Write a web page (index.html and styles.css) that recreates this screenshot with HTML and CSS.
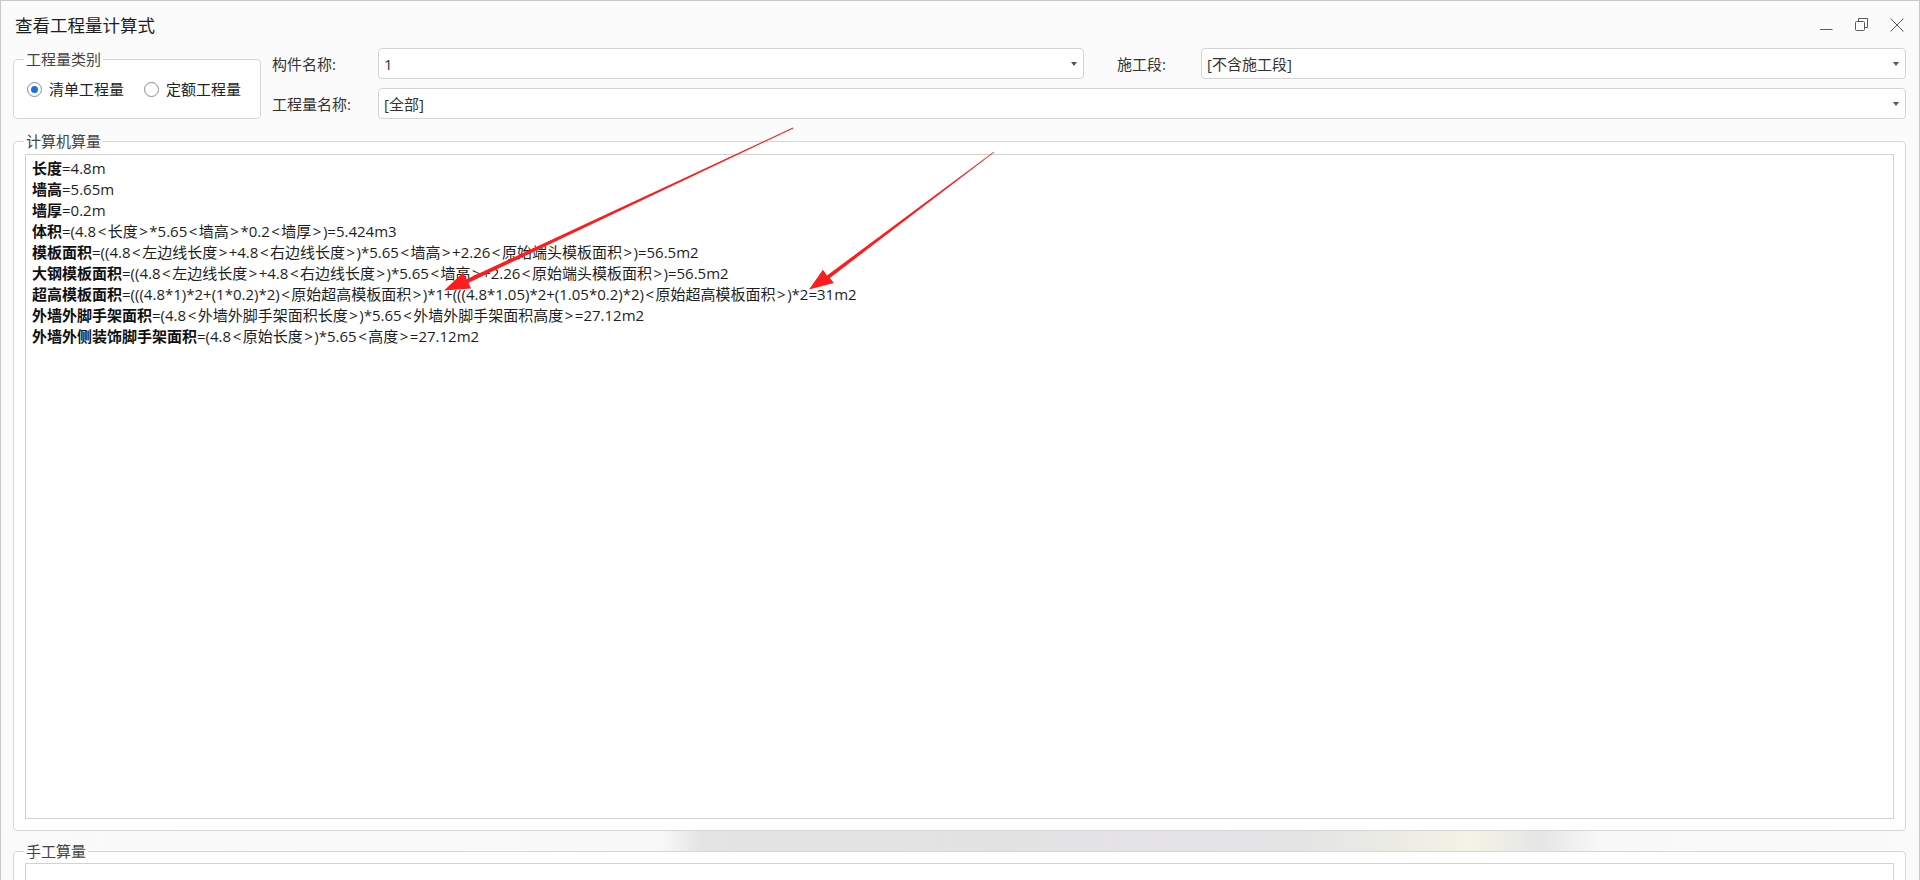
FILE: index.html
```html
<!DOCTYPE html>
<html lang="zh-CN">
<head>
<meta charset="utf-8">
<title>查看工程量计算式</title>
<link rel="stylesheet" href="styles.css">
</head>
<body>
<div class="window">
  <div class="titlebar">
    <span class="title">查看工程量计算式</span>
    <div class="controls">
      <svg class="ctl" width="14" height="14" viewBox="0 0 14 14"><path d="M0 11.5H12.5" /></svg>
      <svg class="ctl" width="14" height="14" viewBox="0 0 14 14"><path d="M3.5 3V0.5H12.5V9.5H10" /><rect x="0.5" y="3.5" width="9" height="9" rx="1" /></svg>
      <svg class="ctl" width="14" height="14" viewBox="0 0 14 14"><path d="M0.5 0.5L13.5 13.5M13.5 0.5L0.5 13.5" /></svg>
    </div>
  </div>

  <div class="header">
    <fieldset class="group type-group">
      <legend>工程量类别</legend>
      <div class="radios">
        <label class="radio checked"><span class="dot"></span>清单工程量</label>
        <label class="radio"><span class="dot"></span>定额工程量</label>
      </div>
    </fieldset>
    <div class="form">
      <span class="lbl">构件名称:</span>
      <div class="combo"><span>1</span><i class="arrow"></i></div>
      <span class="lbl lbl-seg">施工段:</span>
      <div class="combo"><span>[不含施工段]</span><i class="arrow"></i></div>
      <span class="lbl">工程量名称:</span>
      <div class="combo wide"><span>[全部]</span><i class="arrow"></i></div>
    </div>
  </div>

  <fieldset class="group calc-group">
    <legend>计算机算量</legend>
    <div class="calc-box">
      <div class="line"><b>长度</b>=4.8m</div>
      <div class="line"><b>墙高</b>=5.65m</div>
      <div class="line"><b>墙厚</b>=0.2m</div>
      <div class="line"><b>体积</b>=(4.8<span class="op">&lt;</span>长度<span class="op">&gt;</span>*5.65<span class="op">&lt;</span>墙高<span class="op">&gt;</span>*0.2<span class="op">&lt;</span>墙厚<span class="op">&gt;</span>)=5.424m3</div>
      <div class="line"><b>模板面积</b>=((4.8<span class="op">&lt;</span>左边线长度<span class="op">&gt;</span>+4.8<span class="op">&lt;</span>右边线长度<span class="op">&gt;</span>)*5.65<span class="op">&lt;</span>墙高<span class="op">&gt;</span>+2.26<span class="op">&lt;</span>原始端头模板面积<span class="op">&gt;</span>)=56.5m2</div>
      <div class="line"><b>大钢模板面积</b>=((4.8<span class="op">&lt;</span>左边线长度<span class="op">&gt;</span>+4.8<span class="op">&lt;</span>右边线长度<span class="op">&gt;</span>)*5.65<span class="op">&lt;</span>墙高<span class="op">&gt;</span>+2.26<span class="op">&lt;</span>原始端头模板面积<span class="op">&gt;</span>)=56.5m2</div>
      <div class="line"><b>超高模板面积</b>=(((4.8*1)*2+(1*0.2)*2)<span class="op">&lt;</span>原始超高模板面积<span class="op">&gt;</span>)*1+(((4.8*1.05)*2+(1.05*0.2)*2)<span class="op">&lt;</span>原始超高模板面积<span class="op">&gt;</span>)*2=31m2</div>
      <div class="line"><b>外墙外脚手架面积</b>=(4.8<span class="op">&lt;</span>外墙外脚手架面积长度<span class="op">&gt;</span>)*5.65<span class="op">&lt;</span>外墙外脚手架面积高度<span class="op">&gt;</span>=27.12m2</div>
      <div class="line"><b>外墙外侧装饰脚手架面积</b>=(4.8<span class="op">&lt;</span>原始长度<span class="op">&gt;</span>)*5.65<span class="op">&lt;</span>高度<span class="op">&gt;</span>=27.12m2</div>
    </div>
  </fieldset>

  <div class="lower">
    <fieldset class="group manual-group">
      <legend>手工算量</legend>
      <div class="manual-box"></div>
    </fieldset>
  </div>

  <svg class="arrows" width="1920" height="880" viewBox="0 0 1920 880">
    <polygon points="792.8,127.6 466.5,279.3 463.2,272.4 444,290.5 471.1,288.6 468.5,282.8 793.2,128.4" />
    <polygon points="993.7,151.7 827.0,275.5 822.9,269.7 809,289.5 833.8,283.0 829.9,277.9 994.3,152.3" />
  </svg>
</div>
</body>
</html>
```

FILE: styles.css
```css
* {
  box-sizing: border-box;
}

html,
body {
  margin: 0;
  padding: 0;
}

body {
  width: 1920px;
  height: 880px;
  overflow: hidden;
  background: #ffffff;
  font-family: "Open Sans", "Noto Sans CJK SC", "Microsoft YaHei", sans-serif;
  color: #222;
}

.window {
  position: relative;
  width: 1920px;
  height: 880px;
  border: 1px solid #c9c9c9;
  border-bottom: 0;
  background: #fbfbfb;
  overflow: hidden;
  display: flex;
  flex-direction: column;
}

/* title bar */
.titlebar {
  height: 47px;
  flex: none;
  display: flex;
  align-items: center;
  justify-content: space-between;
  padding: 0 15px 0 14px;
}

.title {
  font-size: 17.5px;
  line-height: 22px;
  color: #1e1e1e;
}

.controls {
  display: flex;
  align-items: center;
  gap: 21px;
}

.ctl {
  display: block;
  fill: none;
  stroke: #5a5a5a;
  stroke-width: 1;
}

/* header */
.header {
  flex: none;
  height: 71px;
  display: flex;
  padding: 0 13px 0 12px;
}

.group {
  margin: 0;
  padding: 0;
  min-width: 0;
  border: 1px solid #d6d6d6;
  border-radius: 4px;
  background: #ffffff;
}

.group legend {
  margin-left: 10px;
  padding: 0 2px;
  font-size: 15px;
  line-height: 18px;
  color: #444;
}

.type-group {
  width: 248px;
  margin-top: 2px;
  align-self: flex-start;
}

.radios {
  display: flex;
  align-items: center;
  padding: 12px 0 20px 13px;
}

.radio {
  display: inline-flex;
  align-items: center;
  gap: 7px;
  font-size: 15px;
  line-height: 18px;
  color: #222;
}

.radio + .radio {
  margin-left: 20px;
}

.dot {
  position: relative;
  width: 15px;
  height: 15px;
  border: 1px solid #8a8a8a;
  border-radius: 50%;
  background: #fff;
}

.radio.checked .dot {
  border-color: #7d8da0;
}

.radio.checked .dot::after {
  content: "";
  position: absolute;
  left: 3px;
  top: 3px;
  width: 7px;
  height: 7px;
  border-radius: 50%;
  background: #1f6fe0;
}

.form {
  flex: 1;
  margin-left: 11px;
  display: grid;
  grid-template-columns: 106px 706px 117px 1fr;
  grid-template-rows: 31px 31px;
  row-gap: 9px;
  align-items: center;
}

.lbl {
  font-size: 15px;
  line-height: 18px;
  color: #333;
}

.lbl-seg {
  padding-left: 33px;
}

.combo {
  height: 31px;
  display: flex;
  align-items: center;
  justify-content: space-between;
  padding: 0 6px 0 5px;
  border: 1px solid #d3d3d3;
  border-radius: 4px;
  background: #fff;
  font-size: 15px;
  color: #333;
}

.combo.wide {
  grid-column: 2 / -1;
}

.arrow {
  width: 0;
  height: 0;
  border-left: 3.5px solid transparent;
  border-right: 3.5px solid transparent;
  border-top: 4px solid #555;
}

/* computed quantities */
.calc-group {
  flex: none;
  margin: 13px 13px 0 12px;
  padding: 4px 11px 11px;
}

.calc-group legend,
.manual-group legend {
  margin-left: -1px;
}

.calc-box {
  height: 665px;
  padding: 3px 6px;
  border: 1px solid #d2d2d2;
  background: #fff;
  font-size: 15px;
  line-height: 21px;
  color: #1e1e1e;
}

.line {
  white-space: nowrap;
}

.line b {
  font-weight: 700;
  color: #111;
}

.op {
  margin: 0 1.5px;
}

/* manual quantities */
.lower {
  flex: 1;
  padding: 11px 13px 0 12px;
  background: linear-gradient(90deg, #fafafa 0, #f8f8f8 660px, #e4e4e4 700px, #e2e2e2 1000px, #e5e3e8 1150px, #e4e4e4 1300px, #ecece4 1400px, #f3f3e6 1470px, #e6e6e6 1540px, #f8f8f8 1600px, #fafafa 100%);
}

.manual-group {
  padding: 3px 11px 0;
  height: 300px;
}

.manual-box {
  height: 300px;
  border: 1px solid #d2d2d2;
  background: #fff;
}

/* annotation arrows */
.arrows {
  position: absolute;
  left: -1px;
  top: -1px;
  pointer-events: none;
}

.arrows polygon {
  fill: #ff1c1c;
}
```
